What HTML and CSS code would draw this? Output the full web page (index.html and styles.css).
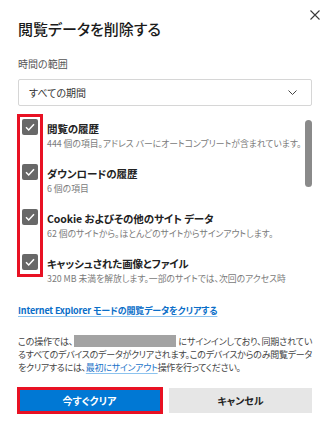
FILE: index.html
```html
<!DOCTYPE html>
<html lang="ja">
<head>
<meta charset="utf-8">
<link rel="stylesheet" href="styles.css">
</head>
<body>
<div class="dialog">
  <div class="header">
    <h1 class="title">閲覧データを削除する</h1>
    <button class="close" aria-label="閉じる">
      <svg width="10" height="10" viewBox="0 0 10 10"><path d="M0.5 0.5L9.5 9.5M9.5 0.5L0.5 9.5" stroke="#3a3a3a" stroke-width="1.1" fill="none"/></svg>
    </button>
  </div>
  <div class="content">
    <div class="label">時間の範囲</div>
    <div class="select">
      <span class="select-text">すべての期間</span>
      <svg class="chevron" width="9" height="5" viewBox="0 0 9 5"><path d="M0.5 0.5L4.5 4.5L8.5 0.5" stroke="#444" stroke-width="1" fill="none"/></svg>
    </div>
    <div class="list-wrap">
      <div class="list">
        <div class="item">
          <span class="check"><svg width="16" height="16" viewBox="0 0 16 16"><path d="M4 8.3L6.7 11L12 5.3" stroke="#fff" stroke-width="1.5" fill="none"/></svg></span>
          <div class="item-text">
            <div class="item-title">閲覧の履歴</div>
            <div class="item-desc">444 個の項目。アドレス バーにオートコンプリートが含まれています。</div>
          </div>
        </div>
        <div class="item">
          <span class="check"><svg width="16" height="16" viewBox="0 0 16 16"><path d="M4 8.3L6.7 11L12 5.3" stroke="#fff" stroke-width="1.5" fill="none"/></svg></span>
          <div class="item-text">
            <div class="item-title">ダウンロードの履歴</div>
            <div class="item-desc">6 個の項目</div>
          </div>
        </div>
        <div class="item">
          <span class="check"><svg width="16" height="16" viewBox="0 0 16 16"><path d="M4 8.3L6.7 11L12 5.3" stroke="#fff" stroke-width="1.5" fill="none"/></svg></span>
          <div class="item-text">
            <div class="item-title">Cookie およびその他のサイト データ</div>
            <div class="item-desc">62 個のサイトから。ほとんどのサイトからサインアウトします。</div>
          </div>
        </div>
        <div class="item">
          <span class="check"><svg width="16" height="16" viewBox="0 0 16 16"><path d="M4 8.3L6.7 11L12 5.3" stroke="#fff" stroke-width="1.5" fill="none"/></svg></span>
          <div class="item-text">
            <div class="item-title">キャッシュされた画像とファイル</div>
            <div class="item-desc">320 MB 未満を解放します。一部のサイトでは、次回のアクセス時</div>
          </div>
        </div>
      </div>
      <div class="thumb"></div>
      <div class="highlight"></div>
    </div>
    <a class="ie-link" href="#">Internet Explorer モードの閲覧データをクリアする</a>
    <p class="notice"><span class="line full">この操作では、<span class="redact"></span>にサインインしており、同期されてい</span><span class="line full">るすべてのデバイスのデータがクリアされます。このデバイスからのみ閲覧データ</span><span class="line">をクリアするには、<a class="inline-link" href="#">最初にサインアウト</a>操作を行ってください。</span></p>
    <div class="buttons">
      <button class="btn primary">今すぐクリア</button>
      <button class="btn secondary">キャンセル</button>
      <div class="btn-highlight"></div>
    </div>
  </div>
</div>
</body>
</html>
```

FILE: styles.css
```css
* { box-sizing: border-box; }
html, body {
  margin: 0;
  padding: 0;
  background: #fff;
}
body {
  width: 330px;
  height: 432px;
  overflow: hidden;
  font-family: "Noto Sans CJK JP", "Noto Sans", sans-serif;
  font-feature-settings: "palt";
  color: #1f1f1f;
}
.dialog {
  width: 330px;
  height: 432px;
}
.header {
  display: flex;
  justify-content: space-between;
  align-items: flex-start;
  padding: 10px 10px 0 18px;
}
.title {
  margin: 9px 0 0;
  font-size: 15px;
  line-height: 20px;
  font-weight: 500;
  color: #1b1b1b;
}
.close {
  width: 10px;
  height: 10px;
  padding: 0;
  border: 0;
  background: none;
  display: block;
}
.close svg { display: block; }
.content {
  padding: 0 18px;
}
.label {
  margin-top: 18px;
  font-size: 10px;
  line-height: 14px;
  color: #555;
}
.select {
  margin-top: 8px;
  height: 27px;
  border: 1px solid #d6d6d6;
  border-radius: 2px;
  display: flex;
  align-items: center;
  justify-content: space-between;
  padding: 0 14px 0 10px;
}
.select-text {
  font-size: 10px;
  color: #333;
}
.chevron { display: block; }
.list-wrap {
  position: relative;
  margin-top: 8px;
  height: 171px;
}
.list {
  height: 171px;
  overflow: hidden;
  padding: 5px 0 0 4px;
}
.item {
  display: flex;
  align-items: flex-start;
  gap: 9px;
  margin-bottom: 15px;
}
.check {
  width: 16px;
  height: 16px;
  flex: none;
  background: #686868;
  border-radius: 2px;
  display: block;
}
.check svg { display: block; }
.item-text { min-width: 0; }
.item-title {
  font-size: 10.5px;
  line-height: 20px;
  font-weight: 700;
  color: #222;
  letter-spacing: -0.1px;
}
.item-desc {
  font-size: 8.8px;
  line-height: 10px;
  color: #7a7a7a;
  white-space: nowrap;
}
.thumb {
  position: absolute;
  left: 287px;
  top: 6px;
  width: 7px;
  height: 67px;
  border-radius: 4px;
  background: #8a8a8a;
}
.highlight {
  position: absolute;
  left: -1px;
  top: 0;
  width: 26px;
  height: 163px;
  border: 3px solid #e81123;
}
.ie-link {
  display: inline-block;
  margin-top: 19px;
  font-size: 9px;
  line-height: 14px;
  font-weight: 700;
  letter-spacing: -0.15px;
  color: #0a6ec8;
  text-decoration: underline;
  text-decoration-color: #8cc3ef;
  text-underline-offset: 2px;
}
.notice {
  margin: 16px 0 0;
  font-size: 9px;
  line-height: 13px;
  letter-spacing: -0.3px;
  color: #444;
}
.line {
  display: block;
  white-space: nowrap;
}
.line.full {
  text-align: justify;
  text-align-last: justify;
  text-justify: inter-character;
}
.redact {
  display: inline-block;
  width: 102px;
  height: 12px;
  background: #a3a3a3;
  vertical-align: -2px;
  margin: 0 2px 0 1px;
}
.inline-link {
  color: #1a73c9;
  text-decoration: underline;
  text-decoration-color: #8cc3ef;
  text-underline-offset: 2px;
}
.buttons {
  position: relative;
  margin-top: 14px;
  display: grid;
  grid-template-columns: 1fr 1fr;
  gap: 8px;
}
.btn {
  height: 25px;
  border: 0;
  border-radius: 0;
  font-family: inherit;
  font-feature-settings: "palt";
  font-size: 10px;
  font-weight: 700;
  padding: 0;
}
.primary {
  background: #0078d4;
  color: #fff;
}
.secondary {
  background: #e6e6e6;
  color: #222;
}
.btn-highlight {
  position: absolute;
  left: -1px;
  top: -1px;
  width: 146px;
  height: 27px;
  border: 3px solid #e81123;
}
```
